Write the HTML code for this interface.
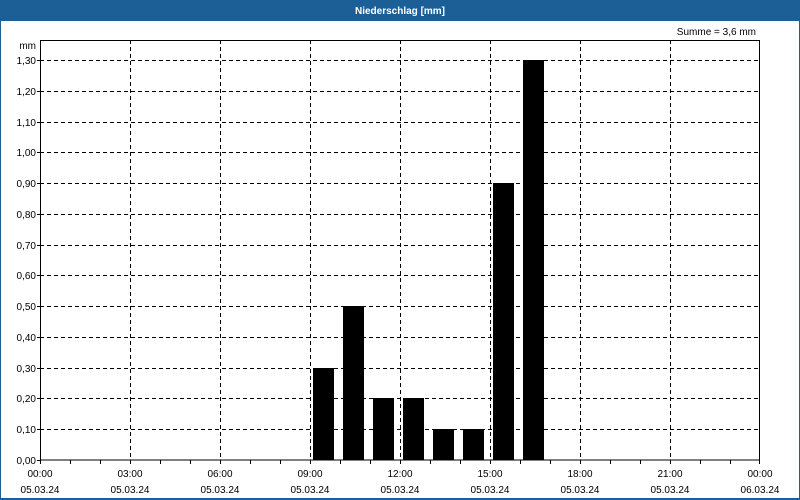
<!DOCTYPE html>
<html><head><meta charset="utf-8"><style>
html,body{margin:0;padding:0;background:#fff;}
svg{display:block;font-family:"Liberation Sans",sans-serif;}
</style></head><body>
<svg width="800" height="500" viewBox="0 0 800 500" xmlns="http://www.w3.org/2000/svg">
<rect x="0" y="0" width="800" height="500" fill="#fff"/>
<rect x="0" y="0" width="800" height="21" fill="#1c5f96"/>
<rect x="0" y="0" width="1" height="500" fill="#1c5f96"/>
<rect x="799" y="0" width="1" height="500" fill="#1c5f96"/>
<rect x="0" y="498" width="800" height="2" fill="#1c5f96"/>
<text x="400" y="14" fill="#fff" font-size="10" font-weight="bold" text-anchor="middle">Niederschlag [mm]</text>
<text x="756" y="35" fill="#000" font-size="10" text-anchor="end">Summe = 3,6 mm</text>
<g stroke="#000" stroke-width="1" stroke-dasharray="4,3" shape-rendering="crispEdges">
<line x1="40" x2="760" y1="60.5" y2="60.5"/><line x1="40" x2="760" y1="91.5" y2="91.5"/><line x1="40" x2="760" y1="122.5" y2="122.5"/><line x1="40" x2="760" y1="152.5" y2="152.5"/><line x1="40" x2="760" y1="183.5" y2="183.5"/><line x1="40" x2="760" y1="214.5" y2="214.5"/><line x1="40" x2="760" y1="245.5" y2="245.5"/><line x1="40" x2="760" y1="275.5" y2="275.5"/><line x1="40" x2="760" y1="306.5" y2="306.5"/><line x1="40" x2="760" y1="337.5" y2="337.5"/><line x1="40" x2="760" y1="368.5" y2="368.5"/><line x1="40" x2="760" y1="398.5" y2="398.5"/><line x1="40" x2="760" y1="429.5" y2="429.5"/>
<line y1="40" y2="460" x1="130.5" x2="130.5"/><line y1="40" y2="460" x1="220.5" x2="220.5"/><line y1="40" y2="460" x1="310.5" x2="310.5"/><line y1="40" y2="460" x1="400.5" x2="400.5"/><line y1="40" y2="460" x1="490.5" x2="490.5"/><line y1="40" y2="460" x1="580.5" x2="580.5"/><line y1="40" y2="460" x1="670.5" x2="670.5"/>
</g>
<g fill="#000" shape-rendering="crispEdges">
<rect x="313" y="368" width="21" height="92"/>
<rect x="343" y="306" width="21" height="154"/>
<rect x="373" y="398" width="21" height="62"/>
<rect x="403" y="398" width="21" height="62"/>
<rect x="433" y="429" width="21" height="31"/>
<rect x="463" y="429" width="21" height="31"/>
<rect x="493" y="183" width="21" height="277"/>
<rect x="523" y="60" width="21" height="400"/>
</g>
<g stroke="#000" stroke-width="1" fill="none" shape-rendering="crispEdges">
<rect x="40.5" y="40.5" width="719" height="419.5"/>
<path d="M70.5 460v4M100.5 460v4M130.5 460v4M160.5 460v4M190.5 460v4M220.5 460v4M250.5 460v4M280.5 460v4M310.5 460v4M340.5 460v4M370.5 460v4M400.5 460v4M430.5 460v4M460.5 460v4M490.5 460v4M520.5 460v4M550.5 460v4M580.5 460v4M610.5 460v4M640.5 460v4M670.5 460v4M700.5 460v4M730.5 460v4M40.5 460v4M759.5 460v4"/>
<path d="M37 60.5h3M37 91.5h3M37 122.5h3M37 152.5h3M37 183.5h3M37 214.5h3M37 245.5h3M37 275.5h3M37 306.5h3M37 337.5h3M37 368.5h3M37 398.5h3M37 429.5h3M37 460.5h3"/>
</g>
<g font-size="10" fill="#000" text-anchor="end">
<text x="36" y="49">mm</text>
<text x="36" y="64">1,30</text><text x="36" y="95">1,20</text><text x="36" y="126">1,10</text><text x="36" y="156">1,00</text><text x="36" y="187">0,90</text><text x="36" y="218">0,80</text><text x="36" y="249">0,70</text><text x="36" y="279">0,60</text><text x="36" y="310">0,50</text><text x="36" y="341">0,40</text><text x="36" y="372">0,30</text><text x="36" y="402">0,20</text><text x="36" y="433">0,10</text><text x="36" y="464">0,00</text>
</g>
<g font-size="10" fill="#000" text-anchor="middle">
<text x="40" y="477">00:00</text><text x="40" y="493">05.03.24</text>
<text x="130" y="477">03:00</text><text x="130" y="493">05.03.24</text>
<text x="220" y="477">06:00</text><text x="220" y="493">05.03.24</text>
<text x="310" y="477">09:00</text><text x="310" y="493">05.03.24</text>
<text x="400" y="477">12:00</text><text x="400" y="493">05.03.24</text>
<text x="490" y="477">15:00</text><text x="490" y="493">05.03.24</text>
<text x="580" y="477">18:00</text><text x="580" y="493">05.03.24</text>
<text x="670" y="477">21:00</text><text x="670" y="493">05.03.24</text>
<text x="760" y="477">00:00</text><text x="760" y="493">06.03.24</text>
</g>
</svg>
</body></html>
